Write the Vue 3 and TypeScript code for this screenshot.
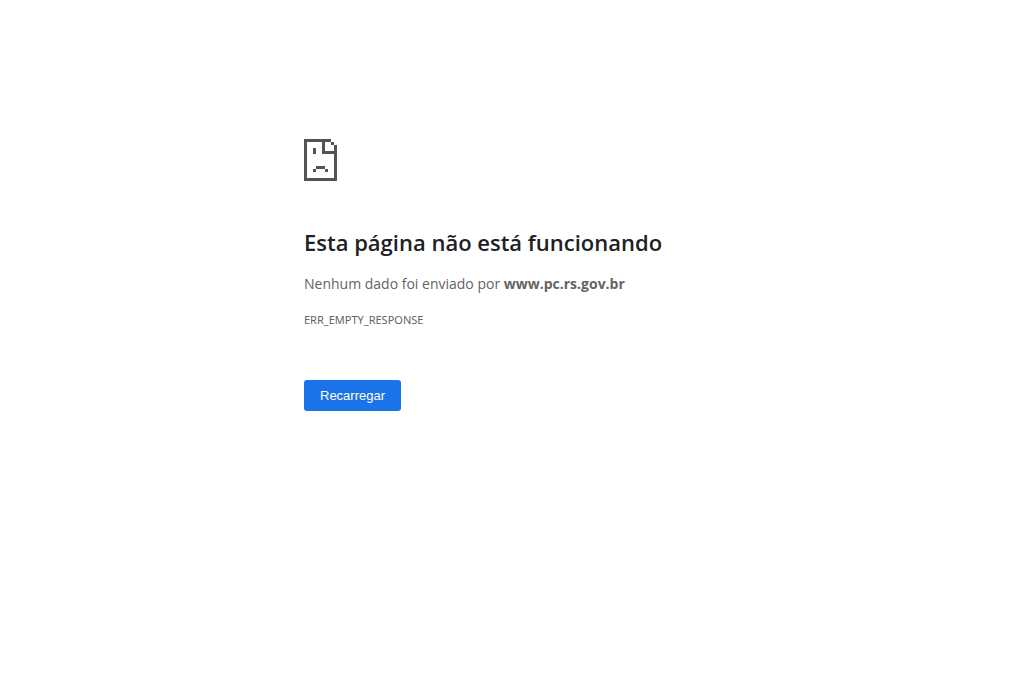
<script setup lang="ts">
const host = 'www.pc.rs.gov.br'
const errorCode = 'ERR_EMPTY_RESPONSE'

function reload(): void {
  window.location.reload()
}
</script>

<template>
  <main class="error-page">
    <svg class="sad-page" viewBox="0 0 33 42" aria-hidden="true" shape-rendering="crispEdges">
      <path fill="#535357" fill-rule="evenodd" d="M0 0H27V3H30V6H33V42H0ZM3 3V39H30V15H18V3ZM21 3V12H30V6H27V3Z" />
      <path fill="#535357" d="M9 9H12V15H9ZM12 27H21V30H12ZM9 30H12V33H9ZM21 30H24V33H21Z" />
    </svg>
    <h1>Esta página não está funcionando</h1>
    <p class="summary">Nenhum dado foi enviado por <strong>{{ host }}</strong></p>
    <p class="code">{{ errorCode }}</p>
    <button type="button" @click="reload">Recarregar</button>
  </main>
</template>

<style>
body {
  margin: 0;
  background: #fff;
}
</style>

<style scoped>
.error-page {
  box-sizing: border-box;
  width: 100%;
  max-width: 416px;
  margin: 0 auto;
  padding-top: 139px;
  font-family: "Open Sans", "Noto Sans", sans-serif;
  color: #646464;
}

.sad-page {
  display: block;
  width: 33px;
  height: 42px;
}

h1 {
  margin: 46px 0 0;
  color: #202124;
  font-size: 22px;
  font-weight: 600;
  line-height: 30px;
  white-space: nowrap;
}

p {
  margin: 0;
}

.summary {
  margin-top: 16px;
  font-size: 14px;
  line-height: 22px;
}

.code {
  margin-top: 16px;
  font-family: "Noto Sans", sans-serif;
  font-size: 11px;
  line-height: 18px;
}

button {
  display: block;
  margin-top: 51px;
  padding: 8px 16px;
  border: 0;
  border-radius: 3px;
  background: #1a73e8;
  color: #fff;
  font: 13px/15px "Liberation Sans", Arial, sans-serif;
  cursor: pointer;
}
</style>
